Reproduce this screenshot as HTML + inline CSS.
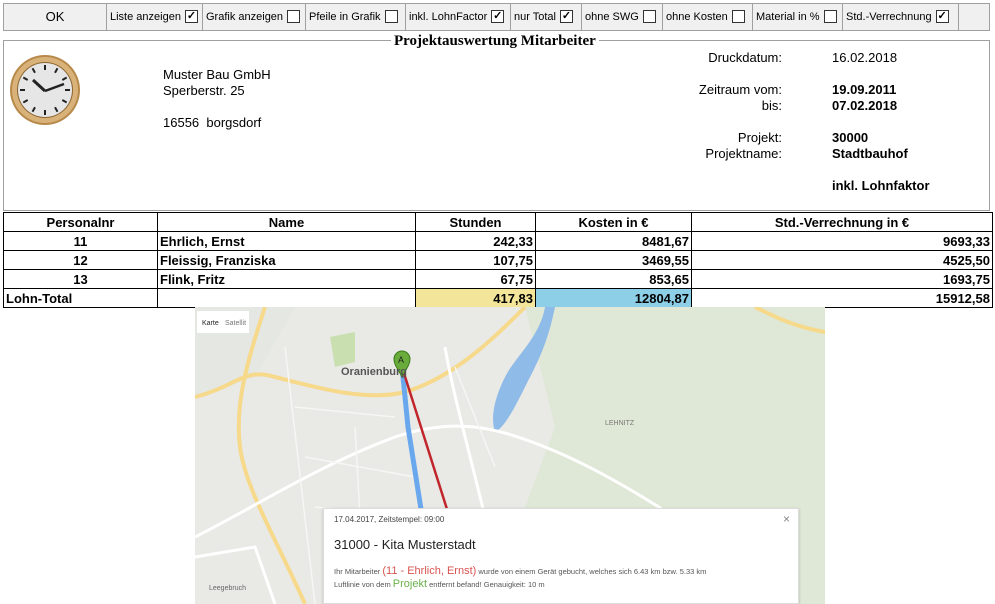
<!DOCTYPE html>
<html><head><meta charset="utf-8"><style>
*{margin:0;padding:0;box-sizing:border-box}
body{width:995px;height:604px;background:#fff;font-family:"Liberation Sans",Arial,sans-serif;position:relative;overflow:hidden;color:#000}
.a{position:absolute}
.tb{left:3px;top:3px;width:987px;height:28px;background:#f0f0f0;border:1px solid #a0a0a0}
.c{position:absolute;top:0;height:26px;border-right:1px solid #a0a0a0;font-size:11px;line-height:26px;padding-left:3px;white-space:nowrap}
.cb{display:inline-block;width:13px;height:13px;border:1px solid #333;background:#fff;vertical-align:middle;margin-left:4px;margin-top:-2px;font-size:11px;line-height:11px;text-align:center;font-weight:bold}
.fs{left:3px;top:40px;width:987px;height:171px;border:1px solid #a0a0a0}
.r{font-size:13px;line-height:16px}
table{position:absolute;left:3px;top:212px;border-collapse:collapse;font-family:"Liberation Sans Narrow","Liberation Sans",sans-serif;font-weight:bold;font-size:13px}
td{border:1px solid #000;height:19px;padding:0 2px;line-height:17px}
.rt{text-align:right}.ct{text-align:center}
</style></head><body>
<div class="a tb">
<div class="c" style="left:0;width:103px;text-align:center;font-size:13px;padding:0;background:#f0f0f0">OK</div>
<div class="c" style="left:103px;width:96px">Liste anzeigen<span class="cb">✓</span></div>
<div class="c" style="left:199px;width:103px">Grafik anzeigen<span class="cb"></span></div>
<div class="c" style="left:302px;width:100px">Pfeile in Grafik<span class="cb"></span></div>
<div class="c" style="left:402px;width:105px">inkl. LohnFactor<span class="cb">✓</span></div>
<div class="c" style="left:507px;width:71px">nur Total<span class="cb">✓</span></div>
<div class="c" style="left:578px;width:81px">ohne SWG<span class="cb"></span></div>
<div class="c" style="left:659px;width:90px">ohne Kosten<span class="cb"></span></div>
<div class="c" style="left:749px;width:90px">Material in %<span class="cb"></span></div>
<div class="c" style="left:839px;width:116px">Std.-Verrechnung<span class="cb">✓</span></div>
</div>
<div class="a fs"></div>
<div class="a" style="left:391px;top:33px;background:#fff;padding:0 3px;font-family:'Liberation Serif',serif;font-weight:bold;font-size:15px">Projektauswertung Mitarbeiter</div>
<svg class="a" style="left:8px;top:53px" width="74" height="74" viewBox="0 0 74 74">
<circle cx="37" cy="37" r="35" fill="#b88a4a"/><circle cx="37" cy="37" r="33" fill="#d9b27a"/><circle cx="37" cy="37" r="28" fill="#8a6431"/>
<circle cx="37" cy="37" r="27" fill="#e6e6e6"/>
<g stroke="#222" stroke-width="2">
<line x1="37" y1="12" x2="37" y2="17"/><line x1="37" y1="57" x2="37" y2="62"/><line x1="12" y1="37" x2="17" y2="37"/><line x1="57" y1="37" x2="62" y2="37"/>
<line x1="49.5" y1="15.3" x2="47" y2="19.7"/><line x1="58.7" y1="24.5" x2="54.3" y2="27"/><line x1="58.7" y1="49.5" x2="54.3" y2="47"/><line x1="49.5" y1="58.7" x2="47" y2="54.3"/>
<line x1="24.5" y1="58.7" x2="27" y2="54.3"/><line x1="15.3" y1="49.5" x2="19.7" y2="47"/><line x1="15.3" y1="24.5" x2="19.7" y2="27"/><line x1="24.5" y1="15.3" x2="27" y2="19.7"/>
<line x1="37" y1="38" x2="25" y2="27" stroke-width="3"/><line x1="37" y1="38" x2="56" y2="31" stroke-width="2.5"/></g>
</svg>
<div class="a r" style="left:163px;top:67px">Muster Bau GmbH<br>Sperberstr. 25<br><br>16556&nbsp; borgsdorf</div>
<div class="a r" style="left:640px;top:50px;width:142px;text-align:right">Druckdatum:<br><br>Zeitraum vom:<br>bis:<br><br>Projekt:<br>Projektname:</div>
<div class="a r" style="left:832px;top:50px">16.02.2018<br><br><b>19.09.2011<br>07.02.2018<br><br>30000<br>Stadtbauhof<br><br>inkl. Lohnfaktor</b></div>
<table>
<tr><td class="ct" style="width:154px">Personalnr</td><td class="ct" style="width:258px">Name</td><td class="ct" style="width:120px">Stunden</td><td class="ct" style="width:156px">Kosten in €</td><td class="ct" style="width:301px">Std.-Verrechnung in €</td></tr>
<tr><td class="ct">11</td><td>Ehrlich, Ernst</td><td class="rt">242,33</td><td class="rt">8481,67</td><td class="rt">9693,33</td></tr>
<tr><td class="ct">12</td><td>Fleissig, Franziska</td><td class="rt">107,75</td><td class="rt">3469,55</td><td class="rt">4525,50</td></tr>
<tr><td class="ct">13</td><td>Flink, Fritz</td><td class="rt">67,75</td><td class="rt">853,65</td><td class="rt">1693,75</td></tr>
<tr><td>Lohn-Total</td><td></td><td class="rt" style="background:#f3e59a">417,83</td><td class="rt" style="background:#8ecfe8">12804,87</td><td class="rt">15912,58</td></tr>
</table>
<svg class="a" style="left:195px;top:307px" width="630" height="297" viewBox="0 0 630 297">
<rect width="630" height="297" fill="#e9e9e6"/>
<path d="M330 0H630V297H345L330 200L360 120Z" fill="#dfe8d6"/>
<path d="M0 0H100L60 70L0 90Z" fill="#e4e7e2"/>
<path d="M350 0C345 30 320 50 310 70C300 90 295 110 300 125C310 120 320 100 330 80C340 60 352 40 360 0Z" fill="#8fbbe8"/>
<path d="M135 30L160 25L160 55L140 60Z" fill="#c9dfb0"/>
<g fill="none" stroke="#f6d98a" stroke-width="4">
<path d="M0 90C40 80 50 60 80 70C120 80 170 95 210 85C260 70 300 30 330 0"/>
<path d="M70 0C50 60 40 100 45 140C50 180 80 230 110 297"/>
<path d="M560 0C580 10 600 20 630 25"/>
</g>
<g fill="none" stroke="#fff" stroke-width="3">
<path d="M0 230C60 200 120 160 200 130C260 110 300 120 350 140C400 160 450 190 510 230"/>
<path d="M250 40C260 100 290 200 310 297"/>
<path d="M0 250L60 240L80 297"/>
</g>
<g fill="none" stroke="#f6f6f4" stroke-width="1.5">
<path d="M100 100L200 110M110 150L220 170M120 200L230 210M260 60L300 160M90 40L120 297M160 120L170 297"/>
</g>
<path d="M207 60L213 120L232 240L240 297" stroke="#6aa8ee" stroke-width="5" fill="none"/>
<path d="M207 60L282 297" stroke="#c0262b" stroke-width="2.5" fill="none"/>
<path d="M207 70C203 62 199 58 199 52A8 8 0 0 1 215 52C215 58 211 62 207 70Z" fill="#6aac3c" stroke="#3a7a1a"/>
<text x="203" y="56" font-size="9" fill="#222">A</text>
<text x="146" y="68" font-size="11" font-weight="bold" fill="#555">Oranienburg</text>
<text x="410" y="118" font-size="7" fill="#777">LEHNITZ</text>
<text x="14" y="283" font-size="7" fill="#666">Leegebruch</text>
<rect x="2" y="4" width="52" height="22" fill="#fff"/>
<text x="7" y="18" font-size="7" fill="#222">Karte</text><text x="30" y="18" font-size="7" fill="#777">Satellit</text>
</svg>
<div class="a" style="left:323px;top:508px;width:476px;height:96px;background:#fff;border:1px solid #ddd;box-shadow:0 1px 3px rgba(0,0,0,.2)">
<div class="a" style="left:10px;top:6px;font-size:8px;color:#444">17.04.2017, Zeitstempel: 09:00</div>
<div class="a" style="right:8px;top:3px;font-size:12px;color:#888">×</div>
<div class="a" style="left:10px;top:28px;font-size:13px;color:#222">31000 - Kita Musterstadt</div>
<div class="a" style="left:10px;top:56px;font-size:7.5px;line-height:13px;color:#555;white-space:nowrap">Ihr Mitarbeiter <span style="color:#d9534f;font-size:11px">(11 - Ehrlich, Ernst)</span> wurde von einem Gerät gebucht, welches sich 6.43 km bzw. 5.33 km<br>Luftlinie von dem <span style="color:#6ab04c;font-size:11px">Projekt</span> entfernt befand! Genauigkeit: 10 m</div>
</div>
</body></html>
